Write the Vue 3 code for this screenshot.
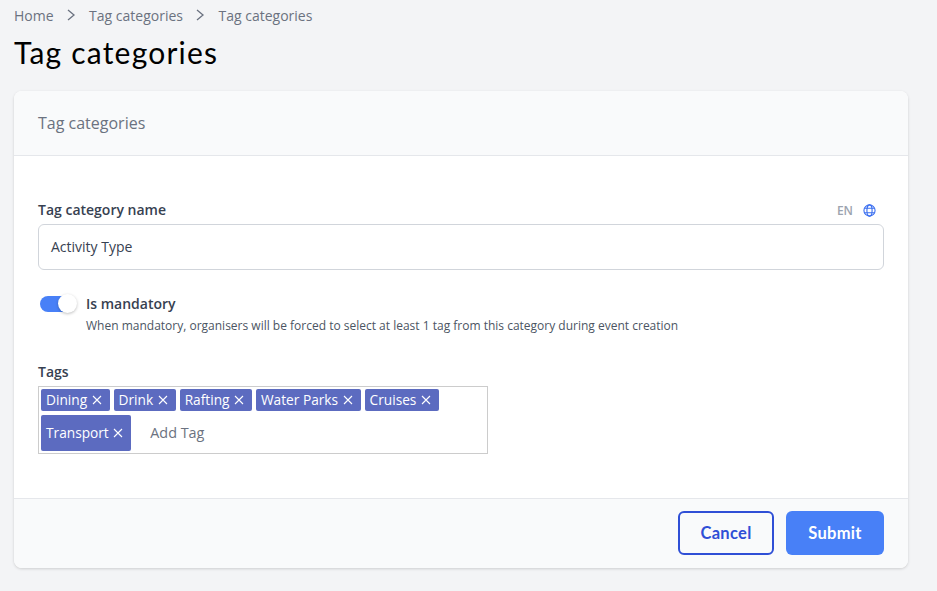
<script setup>
const tags = ['Dining', 'Drink', 'Rafting', 'Water Parks', 'Cruises']
</script>

<template>
  <div class="page">
    <nav class="crumbs">
      <span>Home</span>
      <svg class="chev" viewBox="0 0 10 14"><path d="M2 2l6 5-6 5" /></svg>
      <span>Tag categories</span>
      <svg class="chev" viewBox="0 0 10 14"><path d="M2 2l6 5-6 5" /></svg>
      <span>Tag categories</span>
    </nav>
    <h1 class="title">Tag categories</h1>
    <section class="card">
      <header class="card-head">Tag categories</header>
      <div class="card-body">
        <div class="label-row">
          <label class="label">Tag category name</label>
          <div class="lang">
            <span>EN</span>
            <svg class="globe" viewBox="0 0 14 14">
              <circle cx="7" cy="7" r="6" />
              <ellipse cx="7" cy="7" rx="2.8" ry="6" />
              <path d="M1.6 4.6h10.8M1.6 9.4h10.8" />
            </svg>
          </div>
        </div>
        <div class="input">Activity Type</div>
        <div class="toggle-row">
          <span class="toggle"><span class="knob"></span></span>
          <div>
            <div class="label">Is mandatory</div>
            <div class="help">When mandatory, organisers will be forced to select at least 1 tag from this category during event creation</div>
          </div>
        </div>
        <div class="label tags-label">Tags</div>
        <div class="tags">
          <span v-for="t in tags" :key="t" class="tag">{{ t }}<svg class="x" viewBox="0 0 10 10"><path d="M1 1l8 8M9 1l-8 8" /></svg></span>
          <span class="tag tall">Transport<svg class="x" viewBox="0 0 10 10"><path d="M1 1l8 8M9 1l-8 8" /></svg></span>
          <span class="add">Add Tag</span>
        </div>
      </div>
      <footer class="card-foot">
        <button class="btn cancel">Cancel</button>
        <button class="btn submit">Submit</button>
      </footer>
    </section>
  </div>
</template>

<style>
html, body { margin: 0; background: #f3f4f6; }
</style>

<style scoped>
.page {
  width: 937px;
  height: 591px;
  box-sizing: border-box;
  padding: 5px 29px 0 14px;
  background: #f3f4f6;
  font-family: "Open Sans", sans-serif;
  overflow: hidden;
}
.crumbs {
  display: flex;
  align-items: center;
  height: 20px;
  font-size: 14px;
  color: #6b7280;
}
.chev { width: 10px; height: 14px; margin: 0 13px 0 12.5px; }
.chev path { fill: none; stroke: #6b7280; stroke-width: 1.3; }
.title {
  margin: 4px 0 0;
  height: 53px;
  font-family: "Lato", sans-serif;
  font-size: 30px;
  letter-spacing: 1.2px;
  line-height: 46px;
  font-weight: 400;
  color: #000;
}
.card {
  margin-top: 9px;
  width: 894px;
  height: 477px;
  box-sizing: border-box;
  display: flex;
  flex-direction: column;
  background: #fff;
  border-radius: 8px;
  box-shadow: 0 1px 3px rgba(0, 0, 0, .16);
  overflow: hidden;
}
.card-head {
  height: 64px;
  line-height: 64px;
  padding-left: 24px;
  background: #f9fafb;
  border-bottom: 1px solid #e5e7eb;
  font-size: 16px;
  color: #6b7280;
}
.card-body { flex: 1; padding: 44px 24px 0; }
.label-row { display: flex; justify-content: space-between; align-items: center; height: 20px; }
.label { font-size: 14px; line-height: 20px; font-weight: 600; color: #374151; }
.lang { display: flex; align-items: center; gap: 10px; padding: 1px 8px 0 0; font-size: 12px; font-weight: 600; color: #9ca3af; }
.globe { width: 13px; height: 13px; }
.globe * { fill: none; stroke: #3b6ff0; stroke-width: 1.2; }
.input {
  margin-top: 4px;
  height: 46px;
  box-sizing: border-box;
  border: 1px solid #d1d5db;
  border-radius: 6px;
  padding-left: 12px;
  font-size: 14px;
  line-height: 44px;
  color: #374151;
}
.toggle-row { display: flex; gap: 10px; margin-top: 24px; padding-left: 2px; }
.toggle {
  position: relative;
  flex: none;
  width: 36px;
  height: 16px;
  margin-top: 2px;
  border-radius: 8px;
  background: #4880f7;
}
.knob {
  position: absolute;
  right: -1px;
  top: -2px;
  width: 19px;
  height: 19px;
  border-radius: 50%;
  background: #fff;
  box-shadow: 0 1px 3px rgba(0, 0, 0, .25);
}
.help { margin-top: 4px; font-size: 12px; line-height: 16px; color: #4b5563; }
.tags-label { margin-top: 28px; }
.tags {
  margin-top: 4px;
  width: 450px;
  height: 68px;
  box-sizing: border-box;
  border: 1px solid #ccc;
  padding: 2px 0 0 2px;
  display: flex;
  flex-wrap: wrap;
  align-content: flex-start;
  align-items: flex-start;
  column-gap: 4px;
  row-gap: 4px;
}
.tag {
  display: inline-flex;
  align-items: center;
  height: 22px;
  padding: 0 8px 0 5px;
  border-radius: 2px;
  background: #5c6bc0;
  color: #fff;
  font-size: 13.7px;
  line-height: 20px;
}
.tag.tall { height: 36px; padding-right: 7.5px; }
.x { width: 10px; height: 10px; margin-left: 4.5px; margin-top: -1px; }
.x path { stroke: #fff; stroke-width: 1.1; fill: none; }
.add { margin-left: 15.5px; height: 36px; line-height: 36px; font-size: 14.4px; color: #6b7280; }
.card-foot {
  height: 70px;
  box-sizing: border-box;
  background: #f9fafb;
  border-top: 1px solid #e5e7eb;
  display: flex;
  justify-content: flex-end;
  align-items: flex-start;
  gap: 12px;
  padding: 12px 24px 0;
}
.btn {
  height: 44px;
  border-radius: 6px;
  font-family: "Lato", sans-serif;
  font-size: 16.5px;
  letter-spacing: 0.3px;
  font-weight: 700;
  cursor: pointer;
}
.cancel { width: 96px; background: transparent; border: 2px solid #2f4fd6; color: #2f4fd6; }
.submit { width: 98px; background: #4880f7; border: none; color: #fff; }
</style>
